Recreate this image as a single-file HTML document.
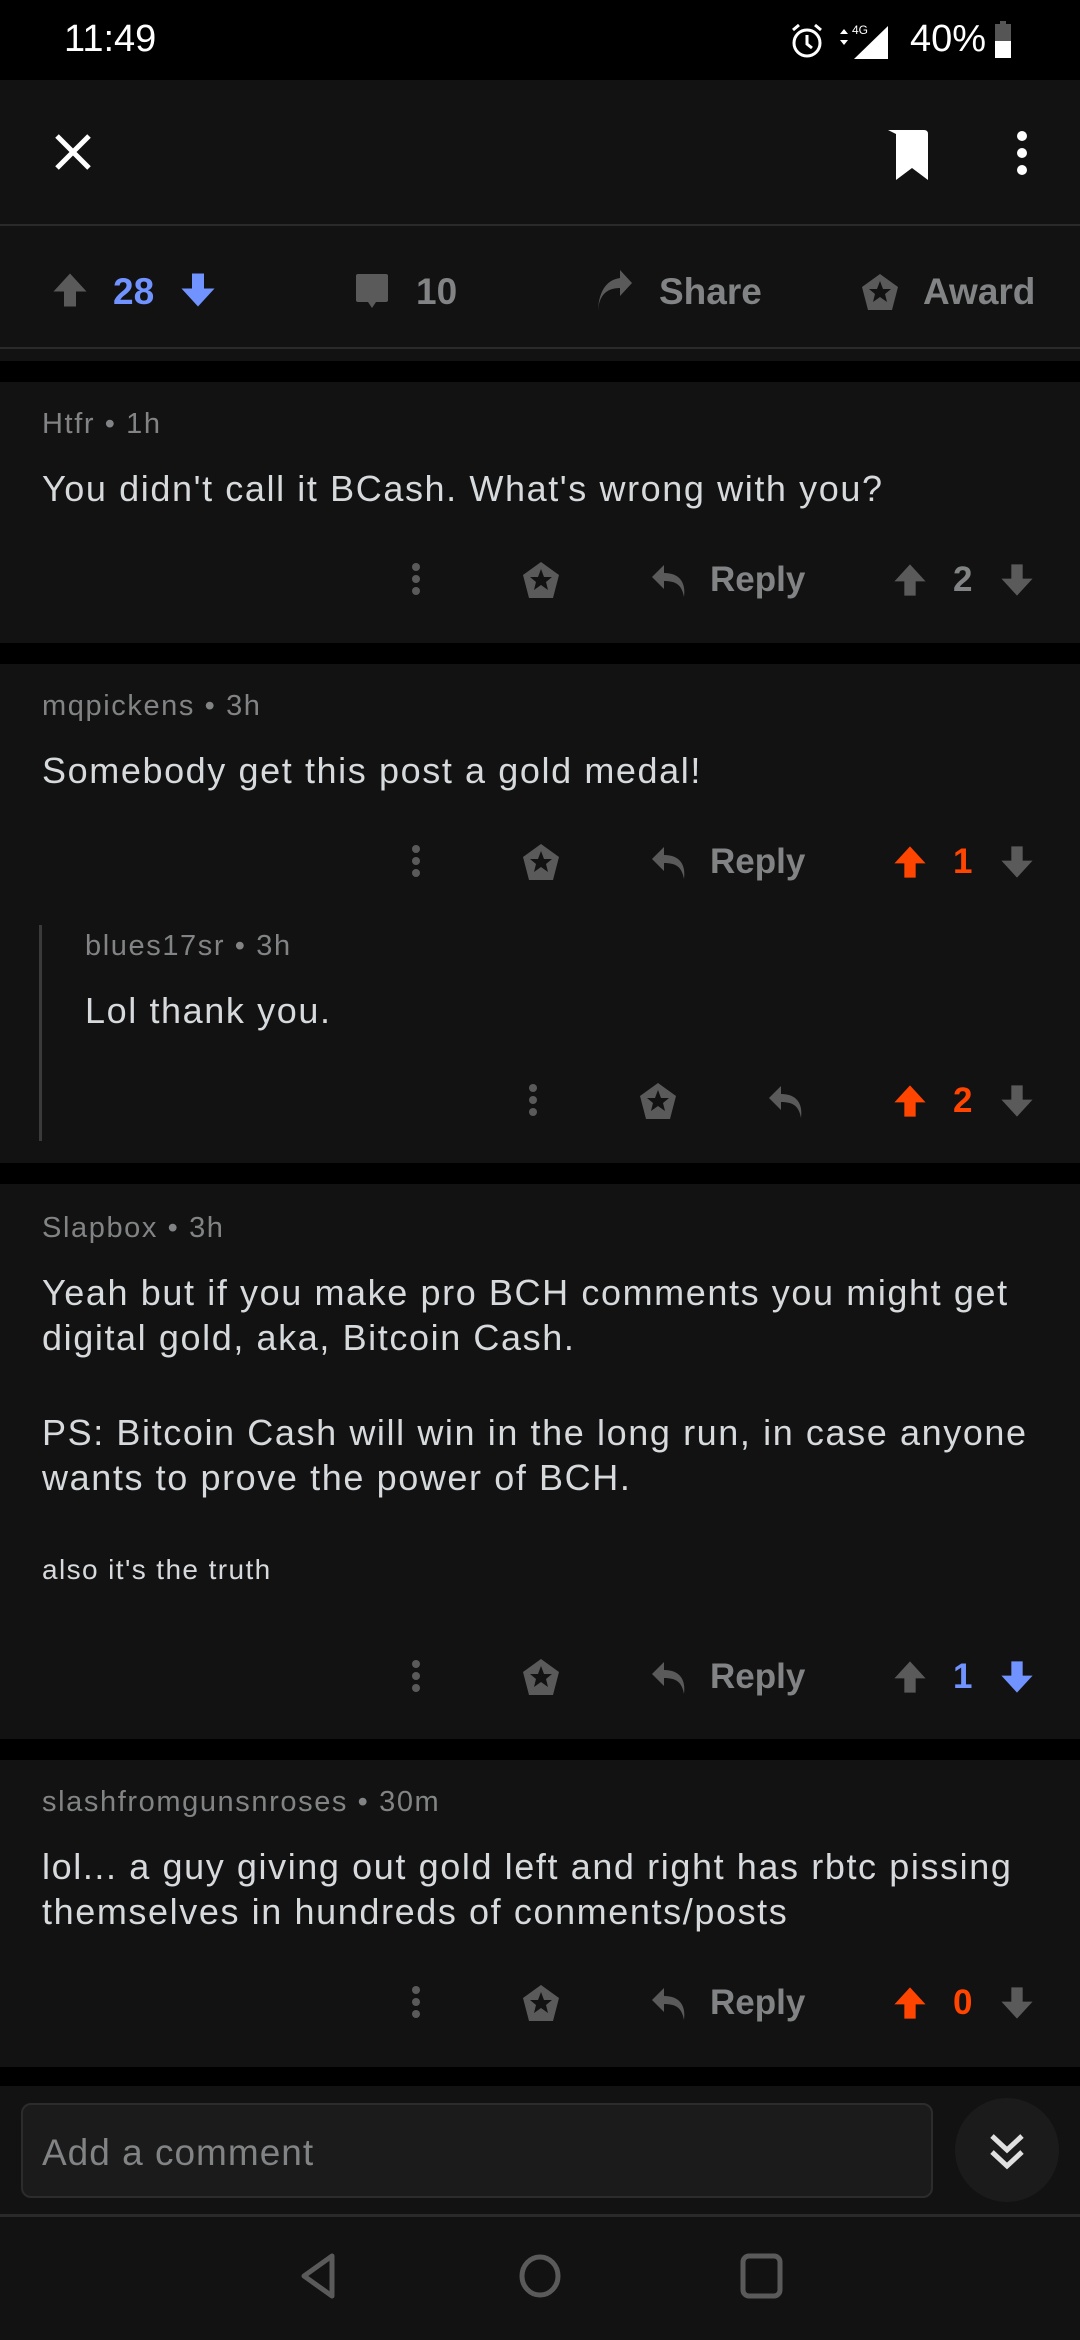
<!DOCTYPE html>
<html><head><meta charset="utf-8"><style>
*{margin:0;padding:0;box-sizing:border-box}
body{width:1080px;height:2340px;background:#121212;position:relative;overflow:hidden;font-family:"Liberation Sans",sans-serif}
.a{position:absolute;white-space:nowrap}
.blk{position:absolute;left:0;width:1080px;background:#000}
.meta{font-size:29px;color:#818384;line-height:28px;letter-spacing:1.6px}
.body{font-size:36px;color:#d7dadc;line-height:45px;letter-spacing:1.6px}
.act{font-size:35px;color:#818384;font-weight:bold;line-height:36px}
svg{position:absolute}
</style></head><body>
<div class="blk" style="top:0;height:80px"></div>
<div class="a" style="left:64px;top:18px;font-size:38px;color:#fff">11:49</div>
<svg style="left:789px;top:22px" width="36" height="38" viewBox="0 0 36 38"><circle cx="18" cy="21" r="13" fill="none" stroke="#fff" stroke-width="3"/><path d="M18 13v9l5 4" stroke="#fff" stroke-width="3" fill="none"/><path d="M4 8l6-5M32 8l-6-5" stroke="#fff" stroke-width="3"/></svg>
<svg style="left:836px;top:22px" width="56" height="38" viewBox="0 0 56 38"><path d="M4 12l4-5 4 5zM4 18l4 5 4-5z" fill="#fff"/><text x="16" y="12" font-size="12" fill="#fff" font-family="Liberation Sans">4G</text><path d="M18 37L52 4V37Z" fill="#fff"/></svg>
<div class="a" style="left:910px;top:18px;font-size:38px;color:#fff">40%</div>
<div class="a" style="left:995px;top:24px;width:16px;height:34px;background:#555"></div>
<div class="a" style="left:995px;top:41px;width:16px;height:17px;background:#fff"></div>
<div class="a" style="left:1000px;top:21px;width:6px;height:4px;background:#555"></div>
<svg style="left:54px;top:133px" width="38" height="38" viewBox="0 0 38 38"><path d="M3 3L35 35M35 3L3 35" stroke="#fff" stroke-width="5"/></svg>
<svg style="left:886px;top:128px" width="44" height="52" viewBox="0 0 44 52"><path d="M2 2H38Q42 2 42 6V52L26 40L10 52V6Z" fill="#fff"/></svg>
<svg style="left:1016px;top:130px" width="12" height="46" viewBox="0 0 12 46"><circle cx="6" cy="6" r="5" fill="#fff"/><circle cx="6" cy="23" r="5" fill="#fff"/><circle cx="6" cy="40" r="5" fill="#fff"/></svg>
<div class="a" style="left:0;top:224px;width:1080px;height:2px;background:#2a2a2a"></div>
<svg style="left:52px;top:270px" width="36" height="40" viewBox="0 0 24 24"><path d="M12 1L23 13H16V23H8V13H1Z" fill="#5a5a5a"/></svg>
<div class="a" style="left:113px;top:271px;font-size:37px;font-weight:bold;color:#7193ff">28</div>
<svg style="left:180px;top:270px" width="36" height="40" viewBox="0 0 24 24"><path d="M12 23L23 11H16V1H8V11H1Z" fill="#7193ff"/></svg>
<svg style="left:354px;top:272px" width="36" height="38" viewBox="0 0 36 38"><path d="M4 2H32Q34 2 34 4V28Q34 30 32 30H22L18 36L14 30H4Q2 30 2 28V4Q2 2 4 2Z" fill="#5a5a5a"/></svg>
<div class="a" style="left:416px;top:271px;font-size:37px;font-weight:bold;color:#818384">10</div>
<svg style="left:594px;top:270px" width="40" height="44" viewBox="0 0 40 44"><path d="M4 44C4 26 12 18 26 18V26L38 13L26 0V8C12 10 4 22 4 44Z" fill="#5a5a5a"/></svg>
<div class="a" style="left:659px;top:271px;font-size:37px;font-weight:bold;color:#818384">Share</div>
<svg style="left:860px;top:272px" width="40" height="40" viewBox="0 0 40 40"><path d="M20 2L38 15L32 38H8L2 15Z" fill="#5a5a5a"/><path d="M20 9L23 17L31 17L25 22L27 30L20 25L13 30L15 22L9 17L17 17Z" fill="#121212"/></svg>
<div class="a" style="left:923px;top:271px;font-size:37px;font-weight:bold;color:#818384">Award</div>
<div class="a" style="left:0;top:347px;width:1080px;height:2px;background:#2a2a2a"></div>
<div class="blk" style="top:361px;height:21px"></div>

<div class="a meta" style="left:42px;top:410px">Htfr • 1h</div>
<div class="a body" style="left:42px;top:466px">You didn't call it BCash. What's wrong with you?</div>
<div class="blk" style="top:643px;height:21px"></div>
<div class="a meta" style="left:42px;top:692px">mqpickens • 3h</div>
<div class="a body" style="left:42px;top:748px">Somebody get this post a gold medal!</div>
<div class="a" style="left:39px;top:925px;width:3px;height:216px;background:#3a3a3a"></div>
<div class="a meta" style="left:85px;top:932px">blues17sr • 3h</div>
<div class="a body" style="left:85px;top:988px">Lol thank you.</div>
<div class="blk" style="top:1163px;height:21px"></div>
<div class="a meta" style="left:42px;top:1214px">Slapbox • 3h</div>
<div class="a body" style="left:42px;top:1270px">Yeah but if you make pro BCH comments you might get<br>digital gold, aka, Bitcoin Cash.</div>
<div class="a body" style="left:42px;top:1410px">PS: Bitcoin Cash will win in the long run, in case anyone<br>wants to prove the power of BCH.</div>
<div class="a" style="left:42px;top:1554px;font-size:28px;letter-spacing:1.4px;color:#d7dadc">also it's the truth</div>
<div class="blk" style="top:1739px;height:21px"></div>
<div class="a meta" style="left:42px;top:1788px">slashfromgunsnroses • 30m</div>
<div class="a body" style="left:42px;top:1844px">lol... a guy giving out gold left and right has rbtc pissing<br>themselves in hundreds of conments/posts</div>
<div class="blk" style="top:2067px;height:19px"></div>

<svg width="0" height="0" style="position:absolute"><defs>
<g id="dots"><circle cx="5" cy="5" r="4" fill="#5a5a5a"/><circle cx="5" cy="17" r="4" fill="#5a5a5a"/><circle cx="5" cy="29" r="4" fill="#5a5a5a"/></g>
<g id="aw"><path d="M20 2L38 15L32 38H8L2 15Z" fill="#5a5a5a"/><path d="M20 9L23 17L31 17L25 22L27 30L20 25L13 30L15 22L9 17L17 17Z" fill="#121212"/></g>
<g id="rp"><path d="M14 2L2 14L14 26V18C26 18 32 22 34 34C36 20 30 10 14 10Z" fill="#5a5a5a"/></g>
</defs></svg>

<svg style="left:411px;top:562px" width="10" height="36"><use href="#dots"/></svg>
<svg style="left:521px;top:560px" width="40" height="40"><use href="#aw"/></svg>
<svg style="left:650px;top:563px" width="36" height="36"><use href="#rp"/></svg>
<div class="a act" style="left:710px;top:562px">Reply</div>
<svg style="left:893px;top:562px" width="34" height="36" viewBox="0 0 24 24"><path d="M12 1L23 13H16V23H8V13H1Z" fill="#5a5a5a"/></svg>
<div class="a act" style="left:953px;top:562px">2</div>
<svg style="left:1000px;top:562px" width="34" height="36" viewBox="0 0 24 24"><path d="M12 23L23 11H16V1H8V11H1Z" fill="#5a5a5a"/></svg>
<svg style="left:411px;top:844px" width="10" height="36"><use href="#dots"/></svg>
<svg style="left:521px;top:842px" width="40" height="40"><use href="#aw"/></svg>
<svg style="left:650px;top:845px" width="36" height="36"><use href="#rp"/></svg>
<div class="a act" style="left:710px;top:844px">Reply</div>
<svg style="left:893px;top:844px" width="34" height="36" viewBox="0 0 24 24"><path d="M12 1L23 13H16V23H8V13H1Z" fill="#ff4500"/></svg>
<div class="a act" style="left:953px;top:844px;color:#ff4500">1</div>
<svg style="left:1000px;top:844px" width="34" height="36" viewBox="0 0 24 24"><path d="M12 23L23 11H16V1H8V11H1Z" fill="#5a5a5a"/></svg>
<svg style="left:528px;top:1083px" width="10" height="36"><use href="#dots"/></svg>
<svg style="left:638px;top:1081px" width="40" height="40"><use href="#aw"/></svg>
<svg style="left:767px;top:1084px" width="36" height="36"><use href="#rp"/></svg>
<svg style="left:893px;top:1083px" width="34" height="36" viewBox="0 0 24 24"><path d="M12 1L23 13H16V23H8V13H1Z" fill="#ff4500"/></svg>
<div class="a act" style="left:953px;top:1083px;color:#ff4500">2</div>
<svg style="left:1000px;top:1083px" width="34" height="36" viewBox="0 0 24 24"><path d="M12 23L23 11H16V1H8V11H1Z" fill="#5a5a5a"/></svg>
<svg style="left:411px;top:1659px" width="10" height="36"><use href="#dots"/></svg>
<svg style="left:521px;top:1657px" width="40" height="40"><use href="#aw"/></svg>
<svg style="left:650px;top:1660px" width="36" height="36"><use href="#rp"/></svg>
<div class="a act" style="left:710px;top:1659px">Reply</div>
<svg style="left:893px;top:1659px" width="34" height="36" viewBox="0 0 24 24"><path d="M12 1L23 13H16V23H8V13H1Z" fill="#5a5a5a"/></svg>
<div class="a act" style="left:953px;top:1659px;color:#7193ff">1</div>
<svg style="left:1000px;top:1659px" width="34" height="36" viewBox="0 0 24 24"><path d="M12 23L23 11H16V1H8V11H1Z" fill="#7193ff"/></svg>
<svg style="left:411px;top:1985px" width="10" height="36"><use href="#dots"/></svg>
<svg style="left:521px;top:1983px" width="40" height="40"><use href="#aw"/></svg>
<svg style="left:650px;top:1986px" width="36" height="36"><use href="#rp"/></svg>
<div class="a act" style="left:710px;top:1985px">Reply</div>
<svg style="left:893px;top:1985px" width="34" height="36" viewBox="0 0 24 24"><path d="M12 1L23 13H16V23H8V13H1Z" fill="#ff4500"/></svg>
<div class="a act" style="left:953px;top:1985px;color:#ff4500">0</div>
<svg style="left:1000px;top:1985px" width="34" height="36" viewBox="0 0 24 24"><path d="M12 23L23 11H16V1H8V11H1Z" fill="#5a5a5a"/></svg>

<div class="a" style="left:21px;top:2103px;width:912px;height:95px;background:#1b1b1b;border:2px solid #2c2c2c;border-radius:10px"></div>
<div class="a" style="left:42px;top:2132px;font-size:37px;letter-spacing:1px;color:#818384">Add a comment</div>
<div class="a" style="left:955px;top:2098px;width:104px;height:104px;border-radius:52px;background:#1b1b1b"></div>
<svg style="left:988px;top:2132px" width="38" height="38" viewBox="0 0 38 38"><path d="M4 4L19 18L34 4M4 20L19 34L34 20" stroke="#e0e0e0" stroke-width="5" fill="none"/></svg>
<div class="a" style="left:0;top:2214px;width:1080px;height:3px;background:#2a2a2a"></div>
<svg style="left:298px;top:2253px" width="42" height="46" viewBox="0 0 42 46"><path d="M34 3L6 23L34 43Z" fill="none" stroke="#5a5a5a" stroke-width="5" stroke-linejoin="round"/></svg>
<svg style="left:518px;top:2253px" width="44" height="46"><ellipse cx="22" cy="23" rx="18" ry="19" fill="none" stroke="#5a5a5a" stroke-width="5"/></svg>
<svg style="left:740px;top:2253px" width="44" height="46"><rect x="3" y="3" width="37" height="40" rx="6" fill="none" stroke="#5a5a5a" stroke-width="5"/></svg>
</body></html>
